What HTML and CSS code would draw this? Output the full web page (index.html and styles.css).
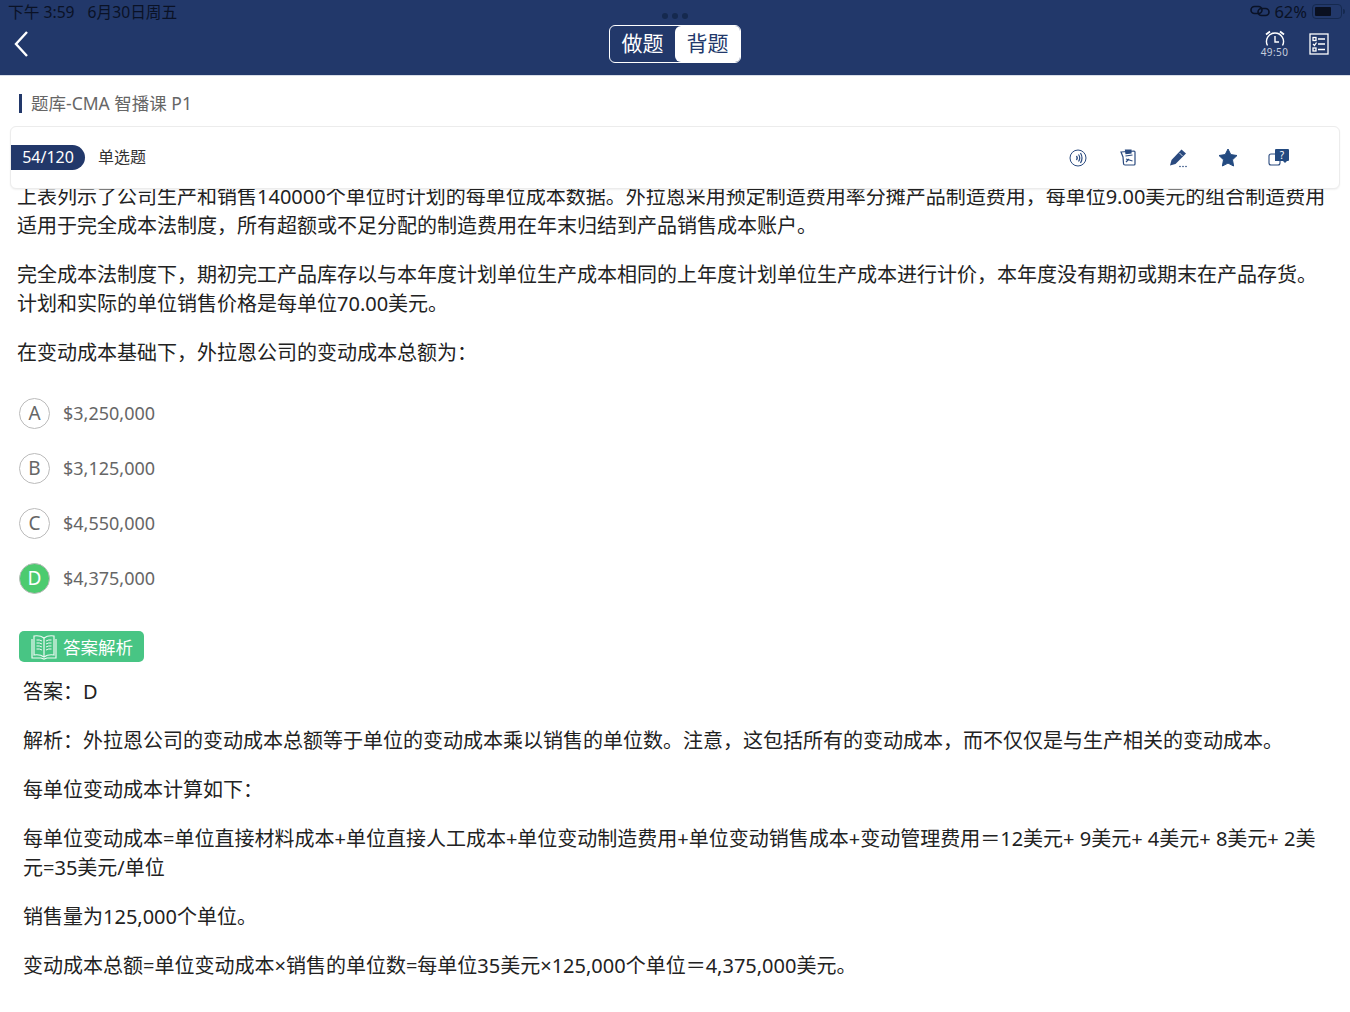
FILE: index.html
```html
<!DOCTYPE html>
<html lang="zh-CN">
  <head>
    <meta charset="UTF-8" />
    <title>题库-CMA智播课 P1</title>
    <link rel="stylesheet" href="styles.css">
  </head>
  <body>
    <header class="top-bar">
      <div class="status-bar">
        <div class="status-time"><span>下午 3:59</span><span>6月30日周五</span></div>
        <div class="status-dots"><i></i><i></i><i></i></div>
        <div class="status-right">
          <svg class="link-icon" width="20" height="12" viewBox="0 0 20 12" fill="none" stroke="#0a1226" stroke-width="1.6">
            <rect x="1" y="1.5" width="11" height="7" rx="3.5" />
            <rect x="8" y="3.5" width="11" height="7" rx="3.5" />
          </svg>
          <span>62%</span>
          <span class="battery"><span class="battery-fill"></span></span>
          <span class="battery-tip"></span>
        </div>
      </div>
      <div class="nav-bar">
        <svg class="back-icon" width="16" height="28" viewBox="0 0 16 28" fill="none" stroke="#ffffff" stroke-width="2.4">
          <path d="M14 2 L3 14 L14 26" />
        </svg>
        <div class="mode-switch">
          <span class="mode-tab">做题</span>
          <span class="mode-tab active">背题</span>
        </div>
        <div class="nav-tools">
          <div class="timer">
            <svg width="24" height="17" viewBox="0 0 24 17" fill="none" stroke="#ffffff" stroke-width="1.4">
              <path d="M4.500 15.500 A8.500 8.500 0 1 1 19.500 15.500" />
              <path d="M12 6 V12 H16" />
              <path d="M3 4.500 L7 1.500 M21 4.500 L17 1.500" stroke-width="1.8" />
            </svg>
            <span>49:50</span>
          </div>
          <svg width="20" height="22" viewBox="0 0 20 22" fill="none" stroke="#ffffff" stroke-width="1.3">
            <rect x="1" y="1" width="18" height="20" />
            <rect x="4" y="4.5" width="3" height="3" />
            <path d="M9 6 H16 M4 11 L5.500 12.500 L7.500 9.500 M9 11 H16 M9 16.500 H16" />
            <rect x="4" y="15" width="3" height="3" />
          </svg>
        </div>
      </div>
    </header>

    <div class="course-title"><span>题库-CMA 智播课 P1</span></div>

    <div class="question-bar">
      <div class="question-info">
        <span class="question-count">54/120</span>
        <span class="question-type">单选题</span>
      </div>
      <div class="question-tools">
        <svg width="20" height="20" viewBox="0 0 20 20" fill="none" stroke="#2a4a7f" stroke-width="1">
          <circle cx="10" cy="10" r="8" />
          <path d="M10.500 6.500 Q13 10 10.500 13.500 M12.500 5 Q15.500 10 12.500 15" stroke-width="1.2" />
          <path d="M8.500 8 Q10 10 8.500 12" stroke-width="1.4" />
        </svg>
        <svg width="20" height="20" viewBox="0 0 20 20" fill="none" stroke="#2a4a7f" stroke-width="1.2">
          <path d="M3 4 L16 3 Q17 3 17 4 V16 Q17 17 16 17 H7 Q5.500 17 5.500 15.500 L5 9 Z" />
          <path d="M7.500 2 L13 2 L13 5 L8 5.500 Z" fill="#2a4a7f" />
          <path d="M7.500 8 L14.500 7 M8 11 L14.500 13 M8 14 L11 11" />
        </svg>
        <svg width="20" height="20" viewBox="0 0 20 20" fill="#2a4a7f">
          <path d="M13.500 1.500 L18 5.500 L7.500 16 L2 17.500 L3.500 12 Z" />
          <path d="M11.500 5 L14.500 8" stroke="#ffffff" stroke-width="0.8" />
          <circle cx="12" cy="18.500" r="0.8" />
          <circle cx="15" cy="18.500" r="0.8" />
          <circle cx="18" cy="18.500" r="0.8" />
        </svg>
        <svg width="20" height="20" viewBox="0 0 20 20" fill="#234a80">
          <path d="M10 1 L12.800 6.600 L19 7.500 L14.500 11.800 L15.600 18 L10 15.100 L4.400 18 L5.500 11.800 L1 7.500 L7.200 6.600 Z" stroke="#234a80" stroke-width="1" stroke-linejoin="round" />
        </svg>
        <svg width="22" height="20" viewBox="0 0 22 20">
          <rect x="1" y="6" width="11" height="11" rx="2" fill="none" stroke="#2a4a7f" stroke-width="1.1" />
          <path d="M7 2 Q7 1 8 1 H20 Q21 1 21 2 V12 Q21 13 20 13 H19 L17 15 L15 13 H7 Z" fill="#234a80" />
          <text x="14" y="10.500" class="help-mark">?</text>
        </svg>
      </div>
    </div>

    <main class="content">
      <div class="question-text">
        <p>上表列示了公司生产和销售140000个单位时计划的每单位成本数据。外拉恩采用预定制造费用率分摊产品制造费用，每单位9.00美元的组合制造费用适用于完全成本法制度，所有超额或不足分配的制造费用在年末归结到产品销售成本账户。</p>
        <p>完全成本法制度下，期初完工产品库存以与本年度计划单位生产成本相同的上年度计划单位生产成本进行计价，本年度没有期初或期末在产品存货。计划和实际的单位销售价格是每单位70.00美元。</p>
        <p>在变动成本基础下，外拉恩公司的变动成本总额为：</p>
      </div>

      <ul class="options">
        <li class="option"><span class="option-letter">A</span><span class="option-text">$3,250,000</span></li>
        <li class="option"><span class="option-letter">B</span><span class="option-text">$3,125,000</span></li>
        <li class="option"><span class="option-letter">C</span><span class="option-text">$4,550,000</span></li>
        <li class="option correct"><span class="option-letter">D</span><span class="option-text">$4,375,000</span></li>
      </ul>

      <div class="answer-tag">
        <svg width="28" height="26" viewBox="0 0 28 26" fill="none" stroke="#ffffff" stroke-width="1.2" opacity="0.9">
          <path d="M14 4 Q10 1 4 2 V21 Q10 20 14 23 Q18 20 24 21 V2 Q18 1 14 4 Z" />
          <path d="M14 4 V23 M2 5 V24 H11 L14 25 L17 24 H26 V5" />
          <path d="M6.500 6 Q9.500 5.500 12 7 M6.500 9 Q9.500 8.500 12 10 M6.500 12 Q9.500 11.500 12 13 M6.500 15 Q9.500 14.500 12 16 M16 7 Q18.500 5.500 21.500 6 M16 10 Q18.500 8.500 21.500 9 M16 13 Q18.500 11.500 21.500 12 M16 16 Q18.500 14.500 21.500 15" stroke-width="1" />
        </svg>
        <span>答案解析</span>
      </div>

      <div class="analysis">
        <p>答案：D</p>
        <p>解析：外拉恩公司的变动成本总额等于单位的变动成本乘以销售的单位数。注意，这包括所有的变动成本，而不仅仅是与生产相关的变动成本。</p>
        <p>每单位变动成本计算如下：</p>
        <p>每单位变动成本=单位直接材料成本+单位直接人工成本+单位变动制造费用+单位变动销售成本+变动管理费用＝12美元+ 9美元+ 4美元+ 8美元+ 2美元=35美元/单位</p>
        <p>销售量为125,000个单位。</p>
        <p>变动成本总额=单位变动成本×销售的单位数=每单位35美元×125,000个单位＝4,375,000美元。</p>
      </div>
    </main>
  </body>
</html>
```

FILE: styles.css
```css
* {
  margin: 0;
  padding: 0;
  box-sizing: border-box;
}

html,
body {
  height: 1012px;
  overflow: hidden;
}

body {
  font-family: "Noto Sans", "Noto Sans CJK SC", sans-serif;
  background: #ffffff;
  color: #222222;
}

/* Top bar */
.top-bar {
  height: 76px;
  background: #22386a;
  border-bottom: 1px solid #d8dde8;
}

.status-bar {
  height: 25px;
  padding: 0 0 3px 8px;
  display: flex;
  justify-content: space-between;
  align-items: center;
  position: relative;
  font-size: 15.7px;
  color: #0a1226;
}

.status-time {
  display: flex;
  gap: 13px;
}

.status-dots {
  position: absolute;
  left: 662px;
  top: 13px;
  display: flex;
  gap: 4px;
}

.status-dots i {
  width: 6px;
  height: 6px;
  border-radius: 50%;
  background: #15294f;
}

.status-right {
  display: flex;
  align-items: center;
  gap: 4px;
  padding-right: 5px;
  font-size: 16.5px;
}

.battery {
  width: 30px;
  height: 15px;
  margin-left: 1px;
  padding: 2px;
  border: 1px solid #15294f;
  border-radius: 4px;
  display: block;
}

.battery-fill {
  display: block;
  width: 16px;
  height: 9px;
  border-radius: 1px;
  background: #0a1020;
}

.battery-tip {
  width: 2px;
  height: 5px;
  margin-left: -3px;
  background: #15294f;
  border-radius: 0 2px 2px 0;
}

.nav-bar {
  height: 38px;
  padding: 0 21px;
  display: grid;
  grid-template-columns: 1fr auto 1fr;
  align-items: center;
}

.back-icon {
  margin-left: -8px;
}

.mode-switch {
  width: 132px;
  height: 38px;
  display: flex;
  border: 1.5px solid #ffffff;
  border-radius: 6px;
  overflow: hidden;
}

.mode-tab {
  width: 65px;
  text-align: center;
  font-size: 21px;
  line-height: 35px;
  color: #ffffff;
}

.mode-tab.active {
  flex: 1;
  background: #ffffff;
  color: #22386a;
  border-radius: 6px 0 0 6px;
}

.nav-tools {
  justify-self: end;
  display: flex;
  align-items: center;
  gap: 19px;
}

.timer {
  width: 31px;
  display: flex;
  flex-direction: column;
  align-items: center;
  font-size: 10px;
  line-height: 11px;
  letter-spacing: 0.4px;
  color: #c6cedd;
}

/* Course title */
.course-title {
  height: 50px;
  padding: 18px 0 0 19px;
}

.course-title span {
  display: block;
  height: 19px;
  line-height: 18px;
  padding-left: 9px;
  border-left: 3px solid #22386a;
  font-size: 17.5px;
  color: #666666;
}

/* Question header card */
.question-bar {
  position: relative;
  z-index: 1;
  height: 63px;
  margin: 0 10px;
  display: flex;
  justify-content: space-between;
  align-items: center;
  background: #ffffff;
  border: 1px solid #ececec;
  border-radius: 6px;
  box-shadow: 0 1px 2px rgba(0, 0, 0, 0.06);
}

.question-info {
  display: flex;
  align-items: center;
  gap: 13px;
  line-height: 25px;
}

.question-count {
  width: 74px;
  height: 25px;
  text-align: center;
  background: #22386a;
  color: #ffffff;
  font-size: 16px;
  border-radius: 0 13px 13px 0;
}

.question-type {
  font-size: 16px;
  color: #333333;
}

.question-tools {
  display: flex;
  align-items: center;
  gap: 30px;
  padding-right: 49px;
}

.help-mark {
  font-size: 10px;
  fill: #ffffff;
  text-anchor: middle;
}

/* Question body */
.content {
  margin-top: -7px;
}

.question-text {
  padding: 0 17px;
  font-size: 20px;
  line-height: 29px;
}

.question-text p,
.analysis p {
  margin-bottom: 20px;
}

.options {
  list-style: none;
  padding: 0 19px;
  margin-top: -1px;
}

.option {
  height: 55px;
  display: flex;
  align-items: center;
  gap: 13px;
  font-size: 18px;
  color: #666666;
}

.option-letter {
  width: 31px;
  height: 31px;
  line-height: 29px;
  text-align: center;
  border: 1px solid #bbbbbb;
  border-radius: 50%;
  font-size: 19px;
}

.option-text {
  margin-top: -2px;
}

.option.correct .option-letter {
  background: #4ccb6f;
  color: #ffffff;
}

.answer-tag {
  width: 125px;
  height: 31px;
  margin: 25px 0 0 19px;
  padding-left: 11px;
  display: flex;
  align-items: center;
  gap: 5px;
  background: #48c584;
  border-radius: 5px;
  font-size: 17.5px;
  line-height: 28px;
  color: #ffffff;
}

.analysis {
  padding: 15px 17px 0 23px;
  font-size: 20px;
  line-height: 29px;
}
```
